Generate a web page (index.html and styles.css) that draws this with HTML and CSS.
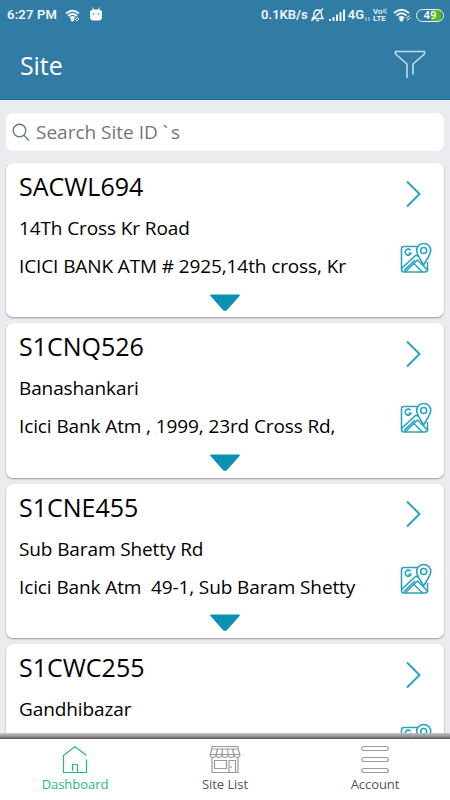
FILE: index.html
```html
<!doctype html>
<html>
<head>
<meta charset="utf-8">
<meta name="viewport" content="width=device-width">
<title>Site</title>
<link rel="stylesheet" href="styles.css">
</head>
<body>
<svg class="defs">
  <symbol id="next" viewBox="0 0 18 30"><path d="M2 2.500 14.500 15 2 27.500"/></symbol>
  <symbol id="map" viewBox="0 0 32 32">
    <path d="M18 4.500H4Q1.500 4.500 1.500 7V27.500Q1.500 30 4 30H25Q27.500 30 27.500 27.500V20"/>
    <path d="M1.500 26.500 15.500 13.500Q17 13 18.500 14.500M5 30 17.500 18 28 28.500M14 21.500 22.500 30M4 28.500 15 18"/>
    <path d="M23.700 23C21 18 16.700 13 16.700 8.500A7 7 0 0 1 30.700 8.500C30.700 13 26 18 23.700 23Z" class="pin"/>
    <circle cx="23.700" cy="8.500" r="3"/>
    <path d="M10.500 8.200A3 3 0 1 0 11 11.200H8.500"/>
  </symbol>
  <symbol id="more" viewBox="0 0 32 18"><path d="M2 .500H30Q31.500 .500 30.500 2L18 16Q16 18 14 16L1.500 2Q.500 .500 2 .500Z"/></symbol>
</svg>
<div class="app">
  <header class="head">
    <div class="status">
      <b class="time">6:27 PM</b>
      <svg class="wifi1" width="16" height="13" viewBox="0 0 16 13"><path d="M1 4.500Q7.500-1 14 4.500M3 7Q7.500 3 12 7M5 9Q7.500 7 10 9"/><circle cx="7.500" cy="10.500" r="1"/><path d="M10.500 10.500 12.500 8.500 14 10 12 12Z" stroke-width="1"/></svg>
      <svg class="droid" width="12" height="14" viewBox="0 0 12 14"><path d="M2.500 .500 3.500 3M9.500 .500 8.500 3"/><rect y="2.500" width="12" height="11" rx="3.500" fill="#fff" stroke="none"/><path class="eyes" d="M2.500 7H4.500M7.500 7H9.500"/></svg>
      <b class="speed">0.1KB/s</b>
      <svg class="bell" width="13" height="14" viewBox="0 0 13 14"><path d="M1.500 10.500Q3 9 3 6Q3 2 6.700 2T10.400 6Q10.400 9 12 10.500ZM5.500 12.500H8M12 .500 .500 13"/></svg>
      <svg class="signal" width="16" height="12" viewBox="0 0 16 12"><path d="M1 12V10M4.500 12V8M8 12V5.500M11.500 12V3M15 12V.500"/></svg>
      <b class="net">4G</b>
      <svg class="data" width="5" height="6" viewBox="0 0 5 6"><path d="M1 1V5M4 1V5"/></svg>
      <b class="volte"><span>Vo<svg width="4" height="6" viewBox="0 0 4 6"><path d="M1 1V5M3 .500V2.500M3 3.500V5.500"/></svg></span><span>LTE</span></b>
      <svg class="wifi2" width="19" height="14" viewBox="0 0 19 14"><path d="M1 5Q8.500-1.500 16 5M3.500 7.500Q8.500 3 13.500 7.500M6 10Q8.500 8 11 10"/><circle cx="8.500" cy="11.500" r="1.200"/><path d="M13 10.500 16.500 7.500M14 12.500 17.500 9.500" stroke-width="1"/></svg>
      <span class="battery">49</span>
    </div>
    <div class="title">
      <h1>Site</h1>
      <svg class="filter" width="32" height="30" viewBox="0 0 32 30"><path d="M13 28V14L1.500 4V1.500H30.500V4L19 14V24.500"/></svg>
    </div>
  </header>
  <main class="list">
    <div class="search">
      <svg width="18" height="19" viewBox="0 0 18 19"><circle cx="7.500" cy="7.500" r="6.300"/><path d="M12 12.200 17 17.500"/></svg>
      <span class="hint" contenteditable>Search Site ID<span class="tick">`</span>s</span>
    </div>
    <section class="card">
      <h2>SACWL694</h2>
      <p>14Th Cross Kr Road</p>
      <p>ICICI BANK ATM # 2925,14th cross, Kr</p>
      <svg class="next"><use href="#next"/></svg>
      <svg class="map"><use href="#map"/></svg>
      <svg class="more"><use href="#more"/></svg>
    </section>
    <section class="card">
      <h2>S1CNQ526</h2>
      <p>Banashankari</p>
      <p>Icici Bank Atm , 1999, 23rd Cross Rd,</p>
      <svg class="next"><use href="#next"/></svg>
      <svg class="map"><use href="#map"/></svg>
      <svg class="more"><use href="#more"/></svg>
    </section>
    <section class="card">
      <h2>S1CNE455</h2>
      <p>Sub Baram Shetty Rd</p>
      <p>Icici Bank Atm&nbsp; 49-1, Sub Baram Shetty</p>
      <svg class="next"><use href="#next"/></svg>
      <svg class="map"><use href="#map"/></svg>
      <svg class="more"><use href="#more"/></svg>
    </section>
    <section class="card">
      <h2>S1CWC255</h2>
      <p>Gandhibazar</p>
      <p></p>
      <svg class="next"><use href="#next"/></svg>
      <svg class="map"><use href="#map"/></svg>
      <svg class="more"><use href="#more"/></svg>
    </section>
  </main>
  <nav class="tabs">
    <a class="tab on">
      <svg width="26" height="29" viewBox="0 0 26 29"><path d="M24.500 10.500 13 1.500 1.500 10.500V27.500H24.500V14.500M10.500 26V19.500H15.500V27.500"/></svg>
      Dashboard
    </a>
    <a class="tab">
      <svg width="32" height="29" viewBox="0 0 32 29"><path d="M3 4V1.500H29V4ZM3 4 1 10Q1.500 12.500 4 12.500T7 10Q7.500 12.500 10 12.500T13 10Q13.500 12.500 16 12.500T19 10Q19.500 12.500 22 12.500T25 10Q25.500 12.500 28 12.500T31 10L29 4M1 9.500H31M8.500 4 7 10M13.500 4 13 10M18.500 4 19 10M23.500 4 25 10M3 12.500V27.500H29V12.500M5.500 15.500H17.500V23.500H5.500ZM20 27.500V15.500H26.500V27.500M22 21V23"/></svg>
      Site List
    </a>
    <a class="tab">
      <svg width="28" height="29" viewBox="0 0 28 29"><rect x=".700" y="1.500" width="26.600" height="4" rx="2"/><rect x=".700" y="12.500" width="26.600" height="4" rx="2"/><rect x=".700" y="23.500" width="26.600" height="4" rx="2"/></svg>
      Account
    </a>
  </nav>
</div>
</body>
</html>
```
FILE: styles.css
```css
body{margin:0; background:#ebecf0; color:#000; font-family:"Open Sans","Noto Sans",sans-serif}
h1,h2,p{margin:0; font-weight:normal}
svg{fill:none; flex:none}
.defs{display:none}
.app{height:800px; display:flex; flex-direction:column; overflow:hidden}

.head{height:100px; flex:none; box-sizing:border-box; background:#317ca5; border-bottom:1px solid #1c688f; color:#fff}
.status{height:30px; display:flex; align-items:center; padding:0 6px 0 7px; font:600 13px/30px Roboto,sans-serif; color:#eef6fa}
.status svg{stroke:#eef6fa; stroke-width:1.4}
.status b{font-weight:600}
.time{width:58px; letter-spacing:.2px}
.droid{margin-left:9px; margin-top:-2px}
.status .droid{stroke-width:1}
.droid .eyes{stroke:#317ca5}
.speed{margin-left:auto}
.bell{margin-left:3px}
.signal{margin-left:5px}
.status .signal{stroke-width:2}
.net{margin-left:3px}
.data{margin:7px 0 0 1px; opacity:.6}
.volte{margin-left:3px; width:14px; font-size:8px; line-height:7.500px; white-space:nowrap}
.volte span{display:block}
.volte svg{stroke-width:1}
.wifi2{margin-left:6px}
.status .wifi1,.status .wifi2{stroke-width:1.8}
.battery{margin-left:4px; box-sizing:border-box; width:28px; height:13px; border:1.5px solid #eef6fa; border-radius:7px; background:linear-gradient(90deg,#317ca5 55%,#55bd16 55% 92%,#317ca5 92%); font-size:11.500px; line-height:11px; text-align:center}
.title{display:flex; justify-content:space-between; padding:20px 24px 0 20px}
.title h1{font-size:25px; line-height:31px; letter-spacing:-.1px}
.filter{stroke:#c2dce9; stroke-width:1.6}

.list{flex:1; min-height:0; overflow:hidden; padding:13px 6px 0}
.search{display:flex; align-items:center; height:38px; padding-left:6px; margin-bottom:12px; background:#fff; border-radius:7px}
.search svg{stroke:#69758b; stroke-width:1.4}
.hint{margin-left:6px; font-size:19px; color:#757575}
.tick{padding:0 3px 0 5px}

.card{display:grid; grid-template-columns:1fr 40px; grid-template-rows:46px 38px 38px 32.4px; height:154.400px; margin-bottom:6px; padding-left:13px; background:#fff; border-radius:7px; box-shadow:0 1px 2px rgba(0,0,0,.35)}
.card h2{font-size:25px; line-height:47px; grid-column:1; grid-row:1}
.card p{font-size:19px; line-height:38px; letter-spacing:-.11px; white-space:nowrap; grid-column:1}
.next,.map{stroke:#2aa3bf; stroke-width:1.6; grid-column:2}
.next{width:18px; height:30px; margin:15.500px 0 0 1px; grid-row:1; stroke-width:2}
.map{width:32px; height:32px; margin:-5px 0 0 -4px; grid-row:3}
.pin{fill:#fff}
.more{grid-column:1/3; grid-row:4; width:32px; height:18px; margin:8.500px 0 0 190px; fill:#0a90b5}

.tabs{position:relative; display:flex; height:61px; flex:none; background:#fff}
.tabs::before{content:""; position:absolute; left:0; right:0; top:-6px; height:6px; background:linear-gradient(rgba(190,190,190,.85),rgba(140,140,140,.95) 60%,#505050)}
.tab{flex:1; display:flex; flex-direction:column; align-items:center; padding-top:6px; font-size:13px; line-height:20px; letter-spacing:-.05px; color:#555}
.tab svg{stroke:#9a9a9a; stroke-width:1.2}
.on{color:#28b978}
.on svg{stroke:#28b978}
```
